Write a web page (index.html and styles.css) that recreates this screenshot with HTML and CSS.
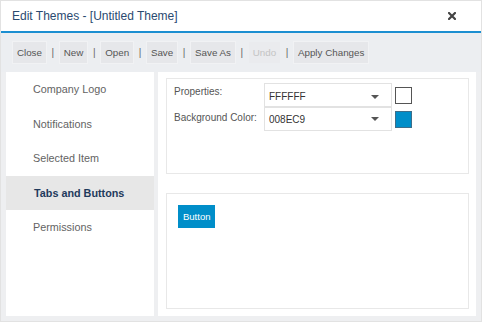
FILE: index.html
```html
<!DOCTYPE html>
<html lang="en">
<head>
    <meta charset="UTF-8">
    <title>Edit Themes</title>
    <link rel="stylesheet" href="styles.css">
</head>
<body>

<div id="dialog">
    <div id="header">
        <span class="title">Edit Themes - [Untitled Theme]</span>
        <span class="close-x">
            <svg width="8" height="8" viewBox="0 0 8 8"><path d="M1 1L7 7M7 1L1 7" stroke="#444" stroke-width="2.2" stroke-linecap="square"/></svg>
        </span>
    </div>
    <div id="toolbar">
        <span class="btn">Close</span>
        <span class="sep">|</span>
        <span class="btn">New</span>
        <span class="sep">|</span>
        <span class="btn">Open</span>
        <span class="sep">|</span>
        <span class="btn">Save</span>
        <span class="sep">|</span>
        <span class="btn">Save As</span>
        <span class="sep">|</span>
        <span class="btn disabled">Undo</span>
        <span class="sep">|</span>
        <span class="btn">Apply Changes</span>
    </div>
    <div id="body">
        <ul id="menu">
            <li>Company Logo</li>
            <li>Notifications</li>
            <li>Selected Item</li>
            <li class="selected">Tabs and Buttons</li>
            <li>Permissions</li>
        </ul>
        <div id="main">
            <div class="box props">
                <div class="row">
                    <span class="label">Properties:</span>
                    <div class="select">FFFFFF<i class="caret"></i></div>
                    <span class="swatch white"></span>
                </div>
                <div class="row">
                    <span class="label">Background Color:</span>
                    <div class="select">008EC9<i class="caret"></i></div>
                    <span class="swatch blue"></span>
                </div>
            </div>
            <div class="box preview">
                <span class="demo-btn">Button</span>
            </div>
        </div>
    </div>
</div>

</body>
</html>
```

FILE: styles.css
```css
*{
    margin: 0;
    padding: 0;
    box-sizing: border-box;
}
ul, ol{
    list-style: none;
}
body{
    font-family: "Liberation Sans", Arial, sans-serif;
    background: #fff;
}

#dialog{
    width: 482px;
    height: 322px;
    border: 1px solid #e2e2e2;
    background: #eeeff1;
    display: flex;
    flex-direction: column;
}
#header{
    height: 32px;
    background: #fff;
    border-bottom: 2px solid #1c8fd1;
    display: flex;
    align-items: center;
    justify-content: space-between;
    padding: 0 25px 1px 11px;
}
#header .title{
    font-size: 12px;
    color: #2a4a70;
}
#header .close-x{
    display: flex;
}

#toolbar{
    height: 39px;
    display: flex;
    align-items: flex-start;
    padding: 8px 0 0 11px;
    background: #eceef1;
}
#toolbar .btn{
    height: 23px;
    line-height: 21px;
    padding: 0 3.9px;
    font-size: 9.8px;
    color: #555;
    background: #e6e7ea;
    border: 1px solid #f1f2f4;
}
#toolbar .btn.disabled{
    color: #c4c4c4;
    background: #eaebee;
    border-color: #eceef1;
}
#toolbar .sep{
    width: 12px;
    text-align: center;
    line-height: 23px;
    font-size: 10px;
    color: #666;
}

#body{
    flex: 1;
    display: flex;
    gap: 4px;
    padding: 0 5px 5px 5px;
}
#menu{
    width: 148px;
    background: #fff;
}
#menu li{
    height: 34.5px;
    line-height: 34.5px;
    padding-left: 27px;
    font-size: 10.8px;
    color: #636363;
}
#menu .selected{
    background: #e7e7e7;
    color: #1f3a5c;
    font-weight: bold;
    padding-left: 28px;
}

#main{
    flex: 1;
    background: #fff;
    padding: 6px 7px 7px 8px;
    display: flex;
    flex-direction: column;
    gap: 19px;
}
.box{
    border: 1px solid #e8e8e8;
}
.props{
    height: 96px;
    padding: 4px 7px;
}
.preview{
    flex: 1;
    padding: 11px;
}
.row{
    display: flex;
    align-items: center;
    height: 24px;
}
.row .label{
    width: 90px;
    font-size: 10px;
    color: #555;
    align-self: flex-start;
    padding-top: 5px;
}
.row:first-child .label{
    padding-top: 3px;
}
.select{
    width: 128px;
    height: 24px;
    border: 1px solid #e2e2e2;
    font-size: 10px;
    color: #333;
    padding: 0 4px;
    display: flex;
    align-items: center;
    justify-content: space-between;
}
.row:first-child .select{
    padding-top: 3px;
}
.caret{
    width: 0;
    height: 0;
    border-left: 4px solid transparent;
    border-right: 4px solid transparent;
    border-top: 4px solid #555;
    margin-right: 8px;
}
.swatch{
    width: 17px;
    height: 17px;
    margin-left: 3px;
    border: 1px solid #555;
}
.swatch.white{
    background: #fff;
}
.swatch.blue{
    background: #008ec9;
    border-color: #3d6e8a;
}

.demo-btn{
    display: inline-block;
    height: 23px;
    line-height: 23px;
    padding: 0 5px;
    font-size: 9.5px;
    color: #fff;
    background: #008ec9;
}
```
